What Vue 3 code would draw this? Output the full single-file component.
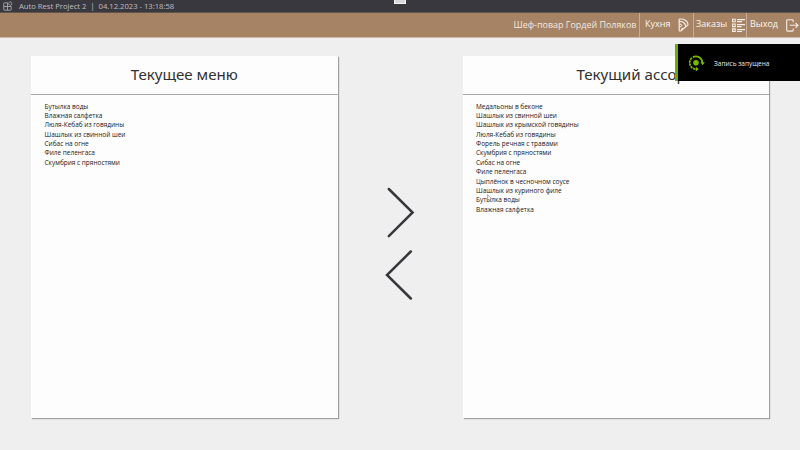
<script setup>
const menu = ['Бутылка воды', 'Влажная салфетка', 'Люля-Кебаб из говядины', 'Шашлык из свинной шеи', 'Сибас на огне', 'Филе пеленгаса', 'Скумбрия с пряностями']
const stock = ['Медальоны в беконе', 'Шашлык из свинной шеи', 'Шашлык из крымской говядины', 'Люля-Кебаб из говядины', 'Форель речная с травами', 'Скумбрия с пряностями', 'Сибас на огне', 'Филе пеленгаса', 'Цыплёнок в чесночном соусе', 'Шашлык из куриного филе', 'Бутылка воды', 'Влажная салфетка']
</script>

<template>
  <div class="app">
    <header class="titlebar">
      <svg class="logo" width="10" height="10" viewBox="0 0 10 10" fill="none" stroke="#aaa9ad" stroke-width="0.9">
        <path d="M4.5 1.8H1.4Q.8 1.8 .8 2.4V8.6Q.8 9.2 1.4 9.2H7.6Q8.2 9.2 8.2 8.6V5.5H.8M4.5 1.8V9.2" />
        <path d="M7.1 .6L9.2 2.6L7.1 4.6L5.1 2.6Z" />
      </svg>
      <span class="apptitle">Auto Rest Project 2&nbsp; |&nbsp; 04.12.2023 - 13:18:58</span>
      <span class="handle"></span>
    </header>
    <nav class="nav">
      <span class="user"><span class="label">Шеф-повар Гордей Поляков</span></span>
      <span class="item kitchen">
        <span class="label">Кухня</span>
        <svg width="11" height="14" viewBox="0 0 11 14" fill="none" stroke="#f5eee8" stroke-width="1.2" stroke-linejoin="round">
          <path d="M1 1.2C5.5 .4 9.4 2.6 10 6Q10.1 7 9.2 7.6L3 12.8Q1.4 13.6 1.2 12V3.6C4.6 3 7.4 4.8 7.8 8.4M1 1.2V3.6" />
          <path d="M1.5 6.2Q3.8 5.8 3.8 7.3T1.5 8.8M3.2 12Q3.2 10 5.4 10.2" stroke-width="1" />
        </svg>
      </span>
      <span class="item orders">
        <span class="label">Заказы</span>
        <svg width="13" height="14" viewBox="0 0 13 14" fill="#f5eee8">
          <path d="M5 1H13V2.2H5ZM5 3.1H10V4.2H5ZM5 6H13V7.2H5ZM5 8.1H9.5V9.2H5ZM5 11H13V12.2H5ZM5 12.9H10V13.9H5Z" />
          <path d="M.6 1.2H3.2V3.8H.6ZM.6 6H3.2V8.6H.6ZM.6 10.9H3.2V13.4H.6Z" fill="none" stroke="#f5eee8" stroke-width="1.1" />
        </svg>
      </span>
      <span class="item exit">
        <span class="label">Выход</span>
        <svg width="13" height="13" viewBox="0 0 13 13" fill="none" stroke="#f5eee8" stroke-width="1.1">
          <path d="M7.2 3.2V1.6Q7.2 .7 6.3 .7H1.6Q.7 .7 .7 1.6V11.2Q.7 12.1 1.6 12.1H6.3Q7.2 12.1 7.2 11.2V9.4M3.8 6.3H12M9.5 3.8L12 6.3L9.5 8.8" />
        </svg>
      </span>
    </nav>
    <main class="content">
      <section class="panel">
        <h1><span class="heading">Текущее меню</span></h1>
        <ul><li v-for="m in menu" :key="m">{{ m }}</li></ul>
      </section>
      <div class="arrows">
        <svg width="30" height="52" viewBox="0 0 30 52"><path d="M3.8 3L27.6 26.5L3.8 50.2" /></svg>
        <svg width="30" height="52" viewBox="0 0 30 52"><path d="M25.8 2.5L2 26L25.8 49.5" /></svg>
      </div>
      <section class="panel">
        <h1 class="stock"><span class="heading">Текущий ассор</span></h1>
        <ul><li v-for="s in stock" :key="s">{{ s }}</li></ul>
      </section>
    </main>
    <aside class="toast">
      <svg width="18" height="18" viewBox="0 0 18 18" fill="none" stroke="#76b900">
        <circle cx="8" cy="8.8" r="2.8" fill="#76b900" stroke="none" />
        <path d="M14.4 9A6.5 6.5 0 0 0 4.8 3.2" stroke-width="1.7" />
        <path d="M3.8 3.9A6.5 6.5 0 0 0 8.6 15.2" stroke-width="1.7" stroke-dasharray="2.4 .6" />
        <path d="M12.4 8.2H16.8L14.6 11.2ZM7.8 12.8V17.4L10.8 15Z" fill="#76b900" stroke="none" />
      </svg>
      <span class="message">Запись запущена</span>
    </aside>
    <svg class="cursor" width="5" height="8" viewBox="0 0 5 8"><path d="M.6 .6V6.5L2 5.2L2.9 7.2L3.7 6.7L3 4.8H4.6Z" fill="#fff" stroke="#77777b" stroke-width=".6" /></svg>
  </div>
</template>

<style>
body { margin: 0; overflow: hidden; }
</style>
<style scoped>
.app { position: relative; width: 800px; height: 450px; overflow: hidden; background: #f0eff0; font-family: "Open Sans", "Noto Sans", sans-serif; color: #303035; }
svg { display: block; flex: none; }
span { white-space: nowrap; }
.titlebar { box-sizing: border-box; height: 13px; display: flex; align-items: center; padding: 0 0 1px 3px; background: #39383e; border-bottom: 1px solid #62534b; }
.apptitle { margin-left: 6px; font-size: 7.65px; line-height: 12px; color: #c0bfc3; }
.handle { position: absolute; left: 394px; top: 0; width: 12px; height: 4px; box-sizing: border-box; background: #d8d8da; border: 1px solid #f5f5f5; border-top: 0; }
.nav { box-sizing: border-box; height: 25px; display: flex; background: #a58364; border-bottom: 1px solid #cfb9a8; color: #fbf6f2; font-size: 9px; line-height: 22px; }
.user { box-sizing: border-box; width: 639px; padding-right: 2.5px; text-align: right; line-height: 23px; color: #f3e9e1; font-size: 8.95px; }
.item { box-sizing: border-box; display: flex; align-items: center; border-left: 1px solid #c6ad98; padding-left: 5px; }
.item .label { align-self: flex-start; }
.kitchen { width: 54px; }
.kitchen svg { margin-left: auto; margin-right: 4px; }
.orders { width: 53px; padding-left: 2px; }
.orders svg { margin-left: auto; margin-right: 1px; }
.exit { width: 54px; padding-left: 3px; }
.exit svg { margin-left: auto; margin-right: 1px; }
.content { display: grid; grid-template-columns: 306.5px 125px 306.5px; padding: 18px 31px 0; }
.panel { height: 362px; background: #fdfdfd; box-shadow: 1px 1px 1px 0 #9fa1a1; }
h1 { box-sizing: border-box; height: 39px; margin: 0; border-bottom: 1px solid #a6a7a8; text-align: center; font-family: "Noto Sans", "Open Sans", sans-serif; font-size: 15.1px; line-height: 37px; font-weight: 400; }
.stock { padding-left: 114px; text-align: left; }
.heading { display: block; }
ul { margin: 0; padding: 6.5px 0 0 13.5px; list-style: none; font-size: 6.48px; line-height: 9.38px; color: #18181b; }
.arrows { display: flex; flex-direction: column; align-items: center; padding-top: 130px; gap: 11px; }
.arrows path { fill: none; stroke: #38373c; stroke-width: 2.5; stroke-linecap: round; stroke-linejoin: miter; }
.toast { position: absolute; left: 675px; top: 44px; width: 125px; height: 37px; box-sizing: border-box; display: flex; align-items: center; padding-left: 10px; background: #000; border-left: 3px solid #6eaa0d; color: #e8e8e8; font-size: 6.5px; }
.message { margin-left: 8px; padding-top: 1px; }
.cursor { position: absolute; left: 487px; top: 194px; }
</style>
